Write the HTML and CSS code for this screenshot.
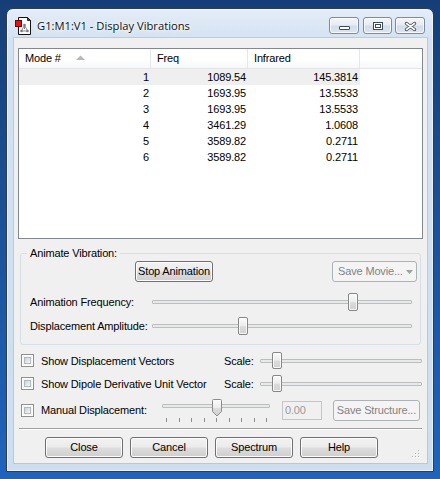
FILE: index.html
```html
<!DOCTYPE html>
<html>
<head>
<meta charset="utf-8">
<link rel="stylesheet" href="styles.css">
</head>
<body>
<div class="window">
  <div class="titlebar">
    <svg class="appicon" width="16" height="18" viewBox="0 0 16 18">
      <path d="M3.5 0.5 H12.5 L15.5 3.5 V17.5 H3.5 Z" fill="#fff" stroke="#111"/>
      <path d="M12.5 0.5 L15.5 3.5 H12.5 Z" fill="#e01010" stroke="#111" stroke-width="0.8"/>
      <path d="M9.5 8 L6.5 14 H12.5 Z M9.5 8 V12" fill="none" stroke="#8a8a8a" stroke-width="1"/>
      <circle cx="9.5" cy="8" r="1.3" fill="#7a7a7a"/>
      <circle cx="6.5" cy="14" r="1.3" fill="#7a7a7a"/>
      <circle cx="12.5" cy="14" r="1.3" fill="#7a7a7a"/>
      <rect x="0.5" y="3.5" width="6" height="6" fill="#e81010" stroke="#7a0000"/>
    </svg>
    <span class="title">G1:M1:V1 - Display Vibrations</span>
    <div class="caps">
      <div class="cap cap-min">
        <svg width="28" height="15" viewBox="0 0 28 15"><rect x="9.5" y="8.5" width="10" height="3" rx="0.5" fill="#fff" stroke="#3d4859"/></svg>
      </div>
      <div class="cap cap-max">
        <svg width="27" height="15" viewBox="0 0 27 15"><rect x="9.5" y="4.5" width="9" height="7" fill="#fff" stroke="#3d4859"/><rect x="11.5" y="6.5" width="5" height="3" fill="none" stroke="#3d4859"/></svg>
      </div>
      <div class="cap cap-close">
        <svg width="28" height="15" viewBox="0 0 28 15"><path d="M10.5 5.5 L18.5 11.5 M18.5 5.5 L10.5 11.5" stroke="#3d4859" stroke-width="3.4" stroke-linecap="round"/><path d="M10.5 5.5 L18.5 11.5 M18.5 5.5 L10.5 11.5" stroke="#fff" stroke-width="1.6" stroke-linecap="round"/></svg>
      </div>
    </div>
  </div>

  <div class="client">
    <div class="list">
      <div class="lv-head">
        <div class="hc c1">Mode #<svg class="sort" width="9" height="5" viewBox="0 0 9 5"><path d="M0 5 L4.5 0.5 L9 5 Z" fill="#b4b8bd"/></svg></div>
        <div class="hc c2">Freq</div>
        <div class="hc c3">Infrared</div>
        <div class="hc rest"></div>
      </div>
      <div class="lv-row sel"><span class="c1">1</span><span class="c2">1089.54</span><span class="c3">145.3814</span></div>
      <div class="lv-row"><span class="c1">2</span><span class="c2">1693.95</span><span class="c3">13.5533</span></div>
      <div class="lv-row"><span class="c1">3</span><span class="c2">1693.95</span><span class="c3">13.5533</span></div>
      <div class="lv-row"><span class="c1">4</span><span class="c2">3461.29</span><span class="c3">1.0608</span></div>
      <div class="lv-row"><span class="c1">5</span><span class="c2">3589.82</span><span class="c3">0.2711</span></div>
      <div class="lv-row"><span class="c1">6</span><span class="c2">3589.82</span><span class="c3">0.2711</span></div>
    </div>

    <div class="group">
      <div class="legend">Animate Vibration:</div>
      <div class="grow1">
        <div class="btn btn-stop">Stop Animation</div>
        <div class="btn disabled btn-movie"><span>Save Movie...</span><svg width="7" height="4" viewBox="0 0 7 4"><path d="M0 0 H7 L3.5 4 Z" fill="#a0a0a0"/></svg></div>
      </div>
      <div class="srow srow1">
        <span class="slabel">Animation Frequency:</span>
        <div class="slider s-wide"><div class="track"></div><div class="thumb" style="left:196px"></div></div>
      </div>
      <div class="srow srow2">
        <span class="slabel">Displacement Amplitude:</span>
        <div class="slider s-wide"><div class="track"></div><div class="thumb" style="left:86px"></div></div>
      </div>
    </div>

    <div class="crow crow1">
      <div class="cl"><span class="chk"></span><span>Show Displacement Vectors</span></div>
      <span class="scale">Scale:</span>
      <div class="slider s-scale"><div class="track"></div><div class="thumb thumb-s" style="left:12px"></div></div>
    </div>
    <div class="crow crow2">
      <div class="cl"><span class="chk"></span><span>Show Dipole Derivative Unit Vector</span></div>
      <span class="scale">Scale:</span>
      <div class="slider s-scale"><div class="track"></div><div class="thumb thumb-s" style="left:12px"></div></div>
    </div>
    <div class="crow crow3">
      <div class="cl cl3"><span class="chk"></span><span>Manual Displacement:</span></div>
      <div class="slider3">
        <div class="track"></div>
        <div class="ticks"><i></i><i></i><i></i><i></i><i></i><i></i><i></i><i></i><i></i></div>
        <svg class="pthumb" style="left:50px" width="10" height="18" viewBox="0 0 10 18">
          <defs><linearGradient id="tg" x1="0" y1="0" x2="0" y2="1"><stop offset="0" stop-color="#fbfbfb"/><stop offset="0.5" stop-color="#ececec"/><stop offset="0.55" stop-color="#dadada"/><stop offset="1" stop-color="#d2d2d2"/></linearGradient></defs>
          <path d="M1.5 0.5 H8.5 Q9.5 0.5 9.5 1.5 V12.5 L5 17 L0.5 12.5 V1.5 Q0.5 0.5 1.5 0.5 Z" fill="url(#tg)" stroke="#8a8a8a"/>
        </svg>
      </div>
      <div class="tbox">0.00</div>
      <div class="btn disabled btn-struct">Save Structure...</div>
    </div>

    <div class="sep"></div>

    <div class="btns">
      <div class="btn">Close</div>
      <div class="btn">Cancel</div>
      <div class="btn">Spectrum</div>
      <div class="btn">Help</div>
    </div>

    <svg class="grip" width="8" height="8" viewBox="0 0 8 8">
      <g fill="#fff"><rect x="7" y="1" width="1" height="1"/><rect x="4" y="4" width="1" height="1"/><rect x="7" y="4" width="1" height="1"/><rect x="1" y="7" width="1" height="1"/><rect x="4" y="7" width="1" height="1"/><rect x="7" y="7" width="1" height="1"/></g>
      <g fill="#b0b0b0"><rect x="6" y="0" width="1" height="1"/><rect x="3" y="3" width="1" height="1"/><rect x="6" y="3" width="1" height="1"/><rect x="0" y="6" width="1" height="1"/><rect x="3" y="6" width="1" height="1"/><rect x="6" y="6" width="1" height="1"/></g>
    </svg>
  </div>
</div>
</body>
</html>
```

FILE: styles.css
```css
* { box-sizing: border-box; }

body {
  margin: 0;
  width: 440px;
  height: 479px;
  overflow: hidden;
  background: linear-gradient(#163e76 0%, #1b4f93 40%, #1f64bd 100%);
  font-family: "Liberation Sans", Arial, sans-serif;
  font-size: 11px;
  letter-spacing: -0.15px;
  color: #000;
}

.window {
  margin: 8px 0 0 6px;
  width: 428px;
  height: 464px;
  border: 1px solid #303d50;
  border-radius: 7px 7px 0 0;
  background: linear-gradient(#e4edf7 0px, #d3e2f2 30px, #cddef0 100%);
  box-shadow: inset 0 0 0 1px rgba(255,255,255,0.55);
  padding: 0 6px 8px 7px;
  display: flex;
  flex-direction: column;
}

.titlebar {
  height: 29px;
  flex: none;
  display: flex;
  align-items: flex-start;
  padding: 8px 2px 0 1px;
}

.appicon { flex: none; }

.title {
  margin-left: 6px;
  font-family: "Open Sans", "Noto Sans", sans-serif;
  font-size: 11.2px;
  letter-spacing: 0;
  line-height: 18px;
  color: #111;
  text-shadow: 0 0 6px #fff, 0 0 3px #fff;
}

.caps {
  margin-left: auto;
  display: flex;
  gap: 4px;
}
.cap-close { margin-left: -1px; }

.cap {
  height: 17px;
  width: 30px;
  border: 1px solid #7d8ba0;
  border-radius: 3px;
  background: linear-gradient(#f3f6fa 0%, #e6ecf3 45%, #d3dde9 55%, #dce5ef 100%);
  box-shadow: inset 0 0 0 1px rgba(255,255,255,0.7);
  display: flex;
}
.cap svg { display: block; }
.cap-max { width: 29px; }

.client {
  height: 425px;
  flex: none;
  background: #f0f0f0;
  position: relative;
  display: flex;
  flex-direction: column;
  box-shadow: 0 0 0 1px rgba(140,160,190,0.35);
}

/* list view */
.list {
  margin: 10px 0 0 4px;
  width: 405px;
  height: 191px;
  flex: none;
  border: 1px solid #828790;
  background: #fff;
}

.lv-head {
  display: flex;
  height: 20px;
  border-bottom: 1px solid #e5e5e5;
  background: linear-gradient(#ffffff 0%, #ffffff 55%, #f6f7f9 100%);
}

.hc {
  height: 19px;
  line-height: 19px;
  padding-left: 6px;
  border-right: 1px solid #e3e6ea;
  display: flex;
  align-items: center;
}
.hc.c1 { width: 132px; }
.hc.c2 { width: 97px; }
.hc.c3 { width: 112px; }
.hc.rest { flex: 1; border-right: none; }

.sort { margin-left: 15px; margin-top: -2px; }

.lv-row {
  display: flex;
  width: 341px;
  height: 16px;
  line-height: 16px;
}
.lv-row span { text-align: right; padding-right: 2px; }
.lv-row .c1 { width: 132px; }
.lv-row .c2 { width: 97px; }
.lv-row .c3 { width: 112px; }
.lv-row.sel { background: #efefef; }

/* group box */
.group {
  margin: 14px 0 0 6px;
  width: 401px;
  height: 92px;
  flex: none;
  border: 1px solid #d5dfe5;
  border-radius: 3px;
  display: flex;
  flex-direction: column;
}

.legend {
  align-self: flex-start;
  margin: -7px 0 0 6px;
  padding: 0 3px;
  background: #f0f0f0;
  line-height: 13px;
}

.grow1 {
  display: flex;
  justify-content: space-between;
  margin-top: 1px;
  padding: 0 3px 0 114px;
}

.btn {
  width: 78px;
  height: 21px;
  border: 1px solid #707070;
  border-radius: 3px;
  background: linear-gradient(#f2f2f2 0%, #ebebeb 48%, #dddddd 52%, #cfcfcf 100%);
  box-shadow: inset 0 0 0 1px #fcfcfc;
  display: flex;
  align-items: center;
  justify-content: center;
  line-height: 13px;
  white-space: nowrap;
  flex: none;
}

.btn.disabled {
  border-color: #adb2b5;
  background: #f4f4f4;
  box-shadow: none;
  color: #838383;
}

.btn-movie {
  width: 85px;
  justify-content: flex-start;
  padding: 0 2px 0 5px;
}
.btn-movie span { flex: none; }
.btn-movie svg { margin-left: 3px; margin-top: 1px; flex: none; }

.btn-struct { width: 87px; margin-left: 11px; margin-top: 1px; }

.srow {
  display: flex;
  align-items: center;
  height: 18px;
  padding-left: 9px;
}
.srow1 { margin-top: 11px; }
.srow2 { margin-top: 6px; }

.slabel { width: 122px; flex: none; }

.slider {
  position: relative;
  display: flex;
  align-items: center;
  flex: none;
}
.s-wide { width: 260px; height: 18px; }
.s-scale { width: 162px; height: 17px; }

.track {
  width: 100%;
  height: 4px;
  border: 1px solid #bdbdbd;
  border-radius: 1px;
  background: #e7eaea;
}

.thumb {
  position: absolute;
  top: 0;
  width: 10px;
  height: 18px;
  border: 1px solid #868686;
  border-radius: 2px;
  background: linear-gradient(#fbfbfb 0%, #ececec 48%, #dadada 55%, #d2d2d2 100%);
  box-shadow: inset 0 0 0 1px rgba(255,255,255,0.8);
}
.thumb-s { height: 17px; }

/* check rows */
.crow {
  display: flex;
  align-items: center;
  height: 17px;
  margin-left: 7px;
  flex: none;
}
.crow1 { margin-top: 7px; }
.crow2 { margin-top: 6px; }
.crow3 { margin-top: 7px; height: 24px; align-items: flex-start; }

.cl {
  width: 203px;
  display: flex;
  align-items: center;
  gap: 7px;
  flex: none;
  white-space: nowrap;
}
.cl3 { width: 141px; height: 22px; }

.chk {
  width: 13px;
  height: 13px;
  flex: none;
  border: 1px solid #8e8f8f;
  background: #f4f4f4;
  box-shadow: inset 0 0 0 1px #fff;
  position: relative;
}
.chk::after {
  content: "";
  position: absolute;
  left: 2px; top: 2px; right: 2px; bottom: 2px;
  border: 1px solid #b5b9be;
  background: linear-gradient(135deg, #cdd1d6 0%, #e6e8ea 60%, #f6f6f6 100%);
}

.scale { width: 36px; flex: none; }

.slider3 {
  position: relative;
  width: 108px;
  height: 24px;
  flex: none;
  display: flex;
  flex-direction: column;
}
.slider3 .track { margin-top: 5px; flex: none; }
.ticks {
  margin: 10px 3px 0 4px;
  height: 4px;
  display: flex;
  justify-content: space-between;
}
.ticks i { width: 1px; height: 4px; background: #8c8c8c; }
.pthumb { position: absolute; top: 0; }

.tbox {
  width: 40px;
  height: 19px;
  margin: 2px 0 0 12px;
  border: 1px solid #c3c6c9;
  background: #f0f0f0;
  color: #9a9a9a;
  padding-left: 2px;
  line-height: 17px;
  flex: none;
}

.sep {
  margin: 5px 0 0 5px;
  width: 403px;
  height: 2px;
  border-top: 1px solid #a0a0a0;
  border-bottom: 1px solid #fff;
  flex: none;
}

.btns {
  display: flex;
  gap: 7px;
  margin: 7px 0 0 31px;
}

.grip {
  position: absolute;
  right: 7px;
  bottom: 5px;
}
```
